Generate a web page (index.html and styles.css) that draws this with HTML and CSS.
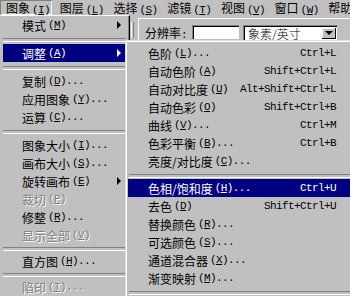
FILE: index.html
```html
<!DOCTYPE html>
<html lang="zh-CN">
<head>
    <meta charset="UTF-8">
    <title>图象 - 调整</title>
    <link rel="stylesheet" href="styles.css">
</head>
<body>
    <div class="menubar">
        <span class="mb-item open">图象<span class="k">(<u>I</u>)</span></span>
        <span class="mb-item">图层<span class="k">(<u>L</u>)</span></span>
        <span class="mb-item">选择<span class="k">(<u>S</u>)</span></span>
        <span class="mb-item">滤镜<span class="k">(<u>T</u>)</span></span>
        <span class="mb-item">视图<span class="k">(<u>V</u>)</span></span>
        <span class="mb-item">窗口<span class="k">(<u>W</u>)</span></span>
        <span class="mb-item">帮助<span class="k">(<u>H</u>)</span></span>
    </div>

    <div class="workspace">
        <span class="grip"></span>
        <div class="optbar">
            <span class="opt-label">分辨率<span class="k">:</span></span>
            <span class="field"></span>
            <span class="select">
                <span class="select-text">象素/英寸</span>
                <span class="select-btn"><i></i></span>
            </span>
        </div>
    </div>

    <div class="menu main-menu">
        <div class="item">模式<span class="k">(<u>M</u>)</span><span class="arrow"></span></div>
        <div class="sep"></div>
        <div class="item active">调整<span class="k">(<u>A</u>)</span><span class="arrow"></span></div>
        <div class="sep"></div>
        <div class="item">复制<span class="k">(<u>D</u>)...</span></div>
        <div class="item">应用图象<span class="k">(<u>Y</u>)...</span></div>
        <div class="item">运算<span class="k">(<u>C</u>)...</span></div>
        <div class="sep"></div>
        <div class="item">图象大小<span class="k">(<u>I</u>)...</span></div>
        <div class="item">画布大小<span class="k">(<u>S</u>)...</span></div>
        <div class="item">旋转画布<span class="k">(<u>E</u>)</span><span class="arrow"></span></div>
        <div class="item off">裁切<span class="k">(<u>P</u>)</span></div>
        <div class="item">修整<span class="k">(<u>R</u>)...</span></div>
        <div class="item off">显示全部<span class="k">(<u>V</u>)</span></div>
        <div class="sep sm"></div>
        <div class="item">直方图<span class="k">(<u>H</u>)...</span></div>
        <div class="sep sm"></div>
        <div class="item off">陷印<span class="k">(<u>T</u>)...</span></div>
    </div>

    <div class="menu sub-menu">
        <div class="item">色阶<span class="k">(<u>L</u>)...</span><span class="k shortcut">Ctrl+L</span></div>
        <div class="item">自动色阶<span class="k">(<u>A</u>)</span><span class="k shortcut">Shift+Ctrl+L</span></div>
        <div class="item">自动对比度<span class="k">(<u>U</u>)</span><span class="k shortcut">Alt+Shift+Ctrl+L</span></div>
        <div class="item">自动色彩<span class="k">(<u>O</u>)</span><span class="k shortcut">Shift+Ctrl+B</span></div>
        <div class="item">曲线<span class="k">(<u>V</u>)...</span><span class="k shortcut">Ctrl+M</span></div>
        <div class="item">色彩平衡<span class="k">(<u>B</u>)...</span><span class="k shortcut">Ctrl+B</span></div>
        <div class="item">亮度/对比度<span class="k">(<u>C</u>)...</span></div>
        <div class="sep"></div>
        <div class="item active">色相/饱和度<span class="k">(<u>H</u>)...</span><span class="k shortcut">Ctrl+U</span></div>
        <div class="item">去色<span class="k">(<u>D</u>)</span><span class="k shortcut">Shift+Ctrl+U</span></div>
        <div class="item">替换颜色<span class="k">(<u>R</u>)...</span></div>
        <div class="item">可选颜色<span class="k">(<u>S</u>)...</span></div>
        <div class="item">通道混合器<span class="k">(<u>X</u>)...</span></div>
        <div class="item">渐变映射<span class="k">(<u>M</u>)...</span></div>
        <div class="sep"></div>
    </div>
</body>
</html>
```

FILE: styles.css
```css
* {
    margin: 0;
    padding: 0;
    box-sizing: border-box;
}

body {
    position: relative;
    width: 350px;
    height: 296px;
    overflow: hidden;
    background: #c0c0c0;
    color: #000;
    font-family: "Noto Sans CJK SC", sans-serif;
    font-size: 12px;
}

/* latin bits (mnemonics, shortcuts) are 6px wide like the old bitmap font */
.k {
    font-family: "Liberation Mono", monospace;
    font-size: 11px;
    letter-spacing: -0.6px;
}

.mb-item > .k,
.item > .k:not(.shortcut) {
    margin-left: 2px;
}

/* menu bar */
.menubar {
    display: flex;
    height: 15px;
    line-height: 15px;
    white-space: nowrap;
}

.mb-item {
    flex: none;
    padding: 0 2px 0 6px;
    margin-right: 1.67px;
}

.mb-item.open {
    box-shadow: inset 1px 1px #808080, inset -1px -1px #fff;
}

/* options bar behind the menus */
.workspace {
    display: flex;
    height: 30px;
    padding-left: 131px;
}

.grip {
    width: 3px;
    height: 16px;
    margin-top: 7px;
    border-left: 1px solid #fff;
    border-right: 1px solid #808080;
}

.optbar {
    flex: 1;
    display: flex;
    align-items: flex-start;
    margin: 3px 0 0 4px;
    padding: 6px 0 0 6px;
    border-top: 1px solid #fff;
    border-left: 1px solid #fff;
}

.opt-label {
    height: 16px;
    line-height: 16px;
}

.field {
    width: 47px;
    height: 14px;
    margin-left: 5px;
    background: #fff;
    border-top: 1px solid #808080;
    border-left: 1px solid #808080;
    box-shadow: inset 1px 1px #000;
}

.select {
    display: flex;
    align-items: center;
    width: 94px;
    height: 15px;
    margin-left: 4px;
    padding: 0 1px 0 4px;
    background: #fff;
    border-top: 1px solid #808080;
    border-left: 1px solid #808080;
    box-shadow: inset 1px 1px #000;
}

.select-text {
    line-height: 13px;
    font-weight: 300;
}

.select-btn {
    display: flex;
    align-items: center;
    justify-content: center;
    width: 14px;
    height: 11px;
    margin-left: auto;
    background: #c0c0c0;
    box-shadow: inset -1px -1px #000, inset 1px 1px #fff;
}

.select-btn i {
    border-top: 4px solid #000;
    border-left: 4px solid transparent;
    border-right: 4px solid transparent;
}

/* drop-down menus */
.menu {
    position: absolute;
    background: #c0c0c0;
}

.main-menu {
    left: 0;
    top: 15px;
    width: 130px;
    height: 281px;
    padding: 0 3px;
    border-top: 1px solid #fff;
    border-right: 1px solid #000;
    box-shadow: inset -1px 0 #808080;
}

.sub-menu {
    left: 125px;
    top: 40px;
    width: 240px;
    height: 260px;
    padding: 3px 2px 0;
    border-top: 1px solid #dfdfdf;
    border-left: 1px solid #dfdfdf;
    box-shadow: inset 1px 1px #fff;
}

.item {
    display: flex;
    align-items: center;
    height: 18px;
    padding: 0 5px 0 19px;
    white-space: nowrap;
}

.sub-menu .item {
    padding: 0 27px 0 20px;
}

.item.active {
    background: #000080;
    color: #fff;
}

.item.off {
    color: #808080;
    text-shadow: 1px 1px 0 #fff;
}

.arrow {
    margin-left: auto;
    border-left: 4px solid #000;
    border-top: 4px solid transparent;
    border-bottom: 4px solid transparent;
}

.item.active .arrow {
    border-left-color: #fff;
}

.shortcut {
    margin-left: auto;
}

.sep {
    height: 10px;
    padding-top: 4px;
}

.sep::before {
    content: "";
    display: block;
    height: 2px;
    border-top: 1px solid #808080;
    border-bottom: 1px solid #fff;
}

.sep.sm {
    height: 8px;
    padding-top: 3px;
}

.sub-menu .sep {
    height: 9px;
    margin-left: 1px;
}
```
